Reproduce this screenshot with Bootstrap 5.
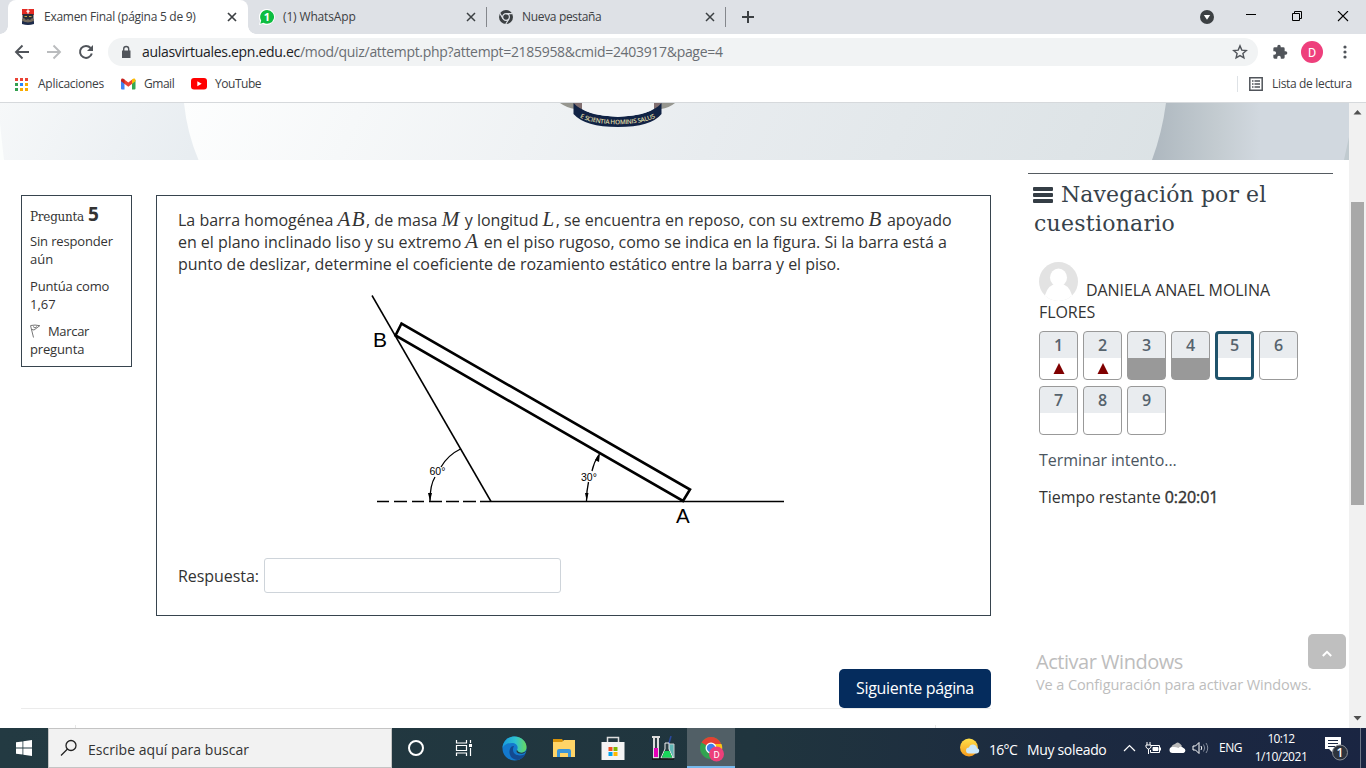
<!DOCTYPE html>
<html lang="es">
<head>
<meta charset="utf-8">
<title>Examen Final (página 5 de 9)</title>
<link href="https://cdn.jsdelivr.net/npm/bootstrap@5.3.0/dist/css/bootstrap.min.css" rel="stylesheet">
<style>
body{width:1366px;height:768px;overflow:hidden;background:#fff;color:#333;font-family:"Open Sans","Noto Sans",sans-serif;font-size:16px}
svg{display:block;flex:none}
.ui{font-size:12px;line-height:18px;color:#3c4043}
.slots{display:grid;align-items:center;white-space:nowrap}
.t{justify-self:start;white-space:nowrap;display:inline-block}
.k0{letter-spacing:-.06px}.k1{letter-spacing:-.15px}.k2{letter-spacing:-.27px}.k3{letter-spacing:-.33px}.k4{letter-spacing:-.47px}.k7{letter-spacing:-.7px}
.tabstrip{height:34px;background:#dee1e6;grid-template-columns:8px 240px 11px 24px 181px 17px 17px 24px 181px 17px 23px 457px 45px 46px 46px 22px}
.tab-on{height:34px;background:#fff;border-radius:8px 8px 0 0;position:relative;grid-template-columns:12px 24px 181px 20px}
.tab-on::before,.tab-on::after{content:"";position:absolute;bottom:0;width:8px;height:8px}
.tab-on::before{left:-8px;background:radial-gradient(circle at 0 0,transparent 7.5px,#fff 8px)}
.tab-on::after{right:-8px;background:radial-gradient(circle at 100% 0,transparent 7.5px,#fff 8px)}
.tab-end{border-right:1px solid #84878c;height:20px;width:6px}
.toolbar{height:36px;grid-template-columns:14px 32px 32px 30px 1150px 14px 32px 32px 20px}
.omni{height:28px;border-radius:14px;background:#f1f3f4;grid-template-columns:11px 23px 1090px 16px;font-size:14px;color:#6a6e73}
.omni b{font-weight:400;color:#202124}
.omni .t{letter-spacing:-.31px}
.bookmarks{grid-template-columns:15px 23px 83px 23px 47px 24px 1022px 12px 23px 80px;border-bottom:1px solid #d6d9dc;height:33px;padding-bottom:4px}
.page-area{height:625px}
.content-side{width:1349px;position:relative}
.banner{height:57px;background:#eceff2}
.qinfo{width:111px;height:172px;margin:35px 24px 0 21px;border:1px solid #37444e;padding:9px 8px;font-size:13px;line-height:18px}
.qinfo .slab{font-size:12px;color:#333;letter-spacing:-.25px}
.qinfo .num{font-size:19px;margin-left:4px}
.slab{font-family:"DejaVu Serif","Noto Sans",serif;color:#37424a}
.qmain{width:835px}
.qbox{height:421px;margin-top:35px;border:1px solid #37444e;padding:13px 21px}
.qtext{line-height:22px;height:66px}
.qtext i{font-family:"Liberation Serif",serif;font-size:21px;line-height:1;letter-spacing:1.4px}
.l2{letter-spacing:-.035px}.l3{letter-spacing:-.055px}
.fig{margin:10px 0 0 182px}
.ans{height:35px;margin-top:23px}
.ans input{width:297px;height:35px;border:1px solid #ced4da;border-radius:3px;padding:0;margin-left:5px}
.next{width:152px;height:39px;background:#052c5d;color:#fff;border-radius:5px;margin-top:53px;line-height:39px;padding:0;border:0}
.next:hover{background:#052c5d;color:#fff}
.endline{width:970px;border-top:1px solid #ebebeb;margin-left:-135px}
.qfoot{width:861px;height:3px;margin:16px 0 0 -81px;border:solid #e6e6e6;border-width:0 1px}
.qnav{width:305px;margin:13px 0 0 37px;border-top:1px solid #555b61;padding:6px 0 0 6px}
.qnav h2{font-size:22px;line-height:29px;margin:0}
.who{padding:22px 0 0 5px;line-height:22px}
.who-top{height:41px}
.who-top svg{align-self:start;margin-top:2px}
.qbtns{display:grid;grid-template-columns:repeat(6,39px);gap:6px 5px;padding-left:5px;margin-top:8px}
.qb{height:49px;border:1px solid #999;border-radius:4px;background:linear-gradient(#e9ecef 26px,#fff 26px);text-align:center;font-weight:600;color:#56636d;line-height:26px;font-size:16px;overflow:hidden}
.qb.done{background:linear-gradient(#e9ecef 26px,#999 26px)}
.qb.now{border:3px solid #1f536b;line-height:22px;background:linear-gradient(#e9ecef 24px,#fff 24px)}
.qb svg{margin:5px auto 0}
.finish{padding:14px 0 0 5px;line-height:22px;color:#4b565f}
.timer{padding:15px 0 0 5px;line-height:22px}
.timer span span{-webkit-text-stroke:.4px}
.sb{width:17px;background:#f1f1f1;position:relative}
.thumb{width:13px;height:303px;margin:99px auto 0 2px;background:#a8a8a8}
.sb svg{position:absolute;left:4px}
.sb .up{top:7px}.sb .down{bottom:7px}
.totop{position:absolute;left:1308px;top:531px;width:38px;height:35px;border-radius:5px;background:#bfbfbf;padding:16px 0 0 14px}
.activate{position:absolute;left:1036px;top:547px;color:#bdbdbd;white-space:nowrap}
.activate div:first-child{font-size:20px;line-height:24px}
.activate div:last-child{font-size:14.5px;line-height:22px}
.activate .k1{letter-spacing:-.1px}
.taskbar{height:40px;background:linear-gradient(90deg,#233a42 0,#20353e 55%,#1c2a40 78%,#1a2542);grid-template-columns:48px 344px 48px 48px 53px 45px 53px 47px 49px 225px 29px 38px 96px 22px 24px 23px 27px 35px 66px 40px 1px}
.taskbar.ui{color:#fff}
.sbox{height:40px;background:#f2f2f2;border:1px solid #c4c4c4;color:#333;grid-template-columns:11px 28px 250px;font-size:14px}
.chr{background:#515f66;height:40px;border-bottom:2px solid #76b9ed;width:48px;justify-self:start;padding:8px 0 0 12px;margin-left:1px}
.taskbar>svg{justify-self:center}
.taskbar>svg.st{justify-self:start}
.wx{font-size:14px}
.clock{width:54px}
.clock .t{display:block;justify-self:auto}
.peek{height:40px;background:#6d7586}
</style>
</head>
<body>
<header class="ui">
 <div class="slots tabstrip">
  <span></span>
  <div class="slots tab-on">
   <span></span>
   <svg width="16" height="16" viewBox="0 0 16 16"><path fill="#e32b24" d="M2 0h12v6H2z"/><path fill="#fff" d="M7.300 .5h1.400v1.300h1v1h-1v1.700H7.300V2.800h-1v-1h1z"/><path fill="#292d38" d="M2.500 5h11v9h-11z"/><path fill="#746a5c" d="M2 10l2-1 2 2 2-1 2 1 2-2 2 1v2l-6 2-6-2z"/><path d="M2 12q6 3 12 0v3q-6 2-12 0z" fill="#1d2b4c"/><path d="M4.500 7.500h2.500M9 7.500h2.500" stroke="#c9a646"/></svg>
   <span class="t k2">Examen Final (página 5 de 9)</span>
   <svg width="14" height="14" viewBox="0 0 14 14" stroke="#3c4043" stroke-width="1.700"><path d="M3 3l8 8M11 3l-8 8"/></svg>
  </div>
  <span></span>
  <svg width="16" height="16" viewBox="0 0 16 16"><path fill="#fff" d="M8 0a8 8 0 1 1-4 15L0 16l1-4A8 8 0 0 1 8 0z"/><path fill="#0dbd41" d="M8 1a6.900 6.900 0 1 1-3.600 12.700L1.300 14.700 2.200 11.500A6.900 6.900 0 0 1 8 1z"/><text x="8" y="12" font-size="11" font-weight="700" text-anchor="middle" fill="#fff">1</text></svg>
  <span class="t k1">(1) WhatsApp</span>
  <svg width="14" height="14" viewBox="0 0 14 14" stroke="#3c4043" stroke-width="1.500"><path d="M3 3l8 8M11 3l-8 8"/></svg>
  <span class="tab-end"></span>
  <svg width="16" height="16" viewBox="0 0 16 16"><circle cx="8" cy="8" r="7" fill="#3c4043"/><circle cx="8" cy="8" r="3.400" fill="none" stroke="#dee1e6" stroke-width="1.200"/><path d="M8 4.600h6.500M5 9.800L1.900 4.300M11 9.800L7.800 15" stroke="#dee1e6" stroke-width="1.200"/></svg>
  <span class="t k3">Nueva pestaña</span>
  <svg width="14" height="14" viewBox="0 0 14 14" stroke="#3c4043" stroke-width="1.500"><path d="M3 3l8 8M11 3l-8 8"/></svg>
  <span class="tab-end"></span>
  <svg width="14" height="14" viewBox="0 0 14 14" stroke="#3c4043" stroke-width="2" style="margin-left:-2px"><path d="M7 1v12M1 7h12"/></svg>
  <svg width="14" height="14" viewBox="0 0 14 14"><circle cx="7" cy="7" r="7" fill="#3c4043"/><path d="M3.800 5h6.400L7 9.800z" fill="#fff"/></svg>
  <svg width="12" height="12" viewBox="0 0 12 12"><path d="M1 3.500h10" stroke="#000"/></svg>
  <svg width="12" height="12" viewBox="0 0 12 12" fill="none" stroke="#000"><path d="M1.500 2.500h7v7h-7zM3.500 2.500v-2h7v7h-2"/></svg>
  <svg width="12" height="12" viewBox="0 0 12 12"><path d="M1 .5l10 10M11 .5L1 10.500" stroke="#000" stroke-width="1.100" transform="translate(0 -.5)"/></svg>
 </div>
 <div class="slots toolbar">
  <span></span>
  <svg width="16" height="16" viewBox="0 0 16 16" fill="none" stroke="#50545a" stroke-width="1.900"><path d="M15 8H2M8.500 1.500L2 8l6.500 6.500"/></svg>
  <svg width="16" height="16" viewBox="0 0 16 16" fill="none" stroke="#babcbe" stroke-width="1.900"><path d="M1 8h13M7.500 1.500L14 8l-6.500 6.500"/></svg>
  <svg width="16" height="16" viewBox="0 0 16 16" fill="none" stroke="#50545a" stroke-width="2"><path d="M13.800 9.500A6 6 0 1 1 12.600 4"/><path fill="#50545a" stroke="none" d="M15 1v6H9z"/></svg>
  <div class="slots omni"><span></span>
   <svg width="14" height="14" viewBox="0 0 14 14"><path fill="#50545a" d="M3 5.500h8.500V13H3z"/><path d="M4.700 6V4a2.500 2.500 0 0 1 5 0v2" fill="none" stroke="#50545a" stroke-width="1.400"/></svg>
   <span class="t"><b>aulasvirtuales.epn.edu.ec</b>/mod/quiz/attempt.php?attempt=2185958&amp;cmid=2403917&amp;page=4</span>
   <svg width="16" height="16" viewBox="0 0 16 16" fill="none" stroke="#50545a" stroke-width="1.400"><path d="M8 1.900l1.800 4.200 4.500.4-3.400 3 1 4.400L8 11.600l-3.900 2.300 1-4.400-3.400-3 4.500-.4z"/></svg>
  </div>
  <span></span>
  <svg width="16" height="16" viewBox="0 0 24 24" fill="#50545a"><path d="M20.500 11H19V7a2 2 0 0 0-2-2h-4V3.500a2.500 2.500 0 0 0-5 0V5H4a2 2 0 0 0-2 2v3.800h1.500a2.700 2.700 0 0 1 0 5.400H2V20a2 2 0 0 0 2 2h3.800v-1.500a2.700 2.700 0 0 1 5.400 0V22H17a2 2 0 0 0 2-2v-4h1.500a2.500 2.500 0 0 0 0-5z"/></svg>
  <svg width="22" height="22" viewBox="0 0 22 22" style="margin-left:-3px"><circle cx="11" cy="11" r="11" fill="#ee3f7c"/><text x="11" y="15.500" font-size="12.500" text-anchor="middle" fill="#fff" font-family="Roboto">D</text></svg>
  <svg width="6" height="16" viewBox="0 0 6 16" fill="#50545a" style="margin-left:6px"><circle cx="3" cy="3" r="1.600"/><circle cx="3" cy="8" r="1.600"/><circle cx="3" cy="13" r="1.600"/></svg>
 </div>
 <div class="slots bookmarks">
  <span></span>
  <svg width="13" height="13" viewBox="0 0 13 13"><path fill="#ea4335" d="M0 0h3v3H0zM5 0h3v3H5zM10 0h3v3h-3z"/><path fill="#34a050" d="M0 5h3v3H0zM0 10h3v3H0z"/><path fill="#2684fc" d="M5 5h3v3H5z"/><path fill="#f9ab00" d="M10 5h3v3h-3zM5 10h3v3H5zM10 10h3v3h-3z"/></svg>
  <span class="t k2">Aplicaciones</span>
  <svg width="15" height="12" viewBox="0 0 15 12"><path fill="#4285f4" d="M0 2h3.500v9.500H1a1 1 0 0 1-1-1z"/><path fill="#34a853" d="M11 2h3.500v8.500a1 1 0 0 1-1 1H11z"/><path fill="#ea4335" d="M3 1.200l4.300 3.400 4.200-3.400v4.200L7.300 8.800 3 5.400z"/><path fill="#c5221f" d="M0 2C0 .3 1.800-.2 3.500 1.400v4.400L0 3.200z"/><path fill="#fbbc04" d="M14.500 2c0-1.700-1.800-2.200-3.500-.6v4.400l3.500-2.600z"/></svg>
  <span class="t k4">Gmail</span>
  <svg width="16" height="12" viewBox="0 0 16 12"><rect width="16" height="11.500" rx="3" fill="#f00"/><path d="M6.300 3.300v5L10.700 5.800z" fill="#fff"/></svg>
  <span class="t k4">YouTube</span>
  <span class="border-start" style="height:16px"></span>
  <svg width="14" height="14" viewBox="0 0 14 14" fill="none" stroke="#50545a" stroke-width="1.500"><path d="M.8.8h12.400v12.400H.8z"/><path d="M3 4h1.500M3 7h1.500M3 10h1.500M5.500 4H11M5.500 7H11M5.500 10H11"/></svg>
  <span class="t k3">Lista de lectura</span>
 </div>
</header>
<div class="page-area d-flex">
 <div class="content-side">
  <svg class="banner" width="1349" height="57" viewBox="0 0 1349 57">
   <defs>
    <linearGradient id="a" gradientUnits="userSpaceOnUse" x1="0" y1="0" x2="170" y2="90"><stop stop-color="#f6f8f9"/><stop offset="1" stop-color="#e8edf1"/></linearGradient>
    <linearGradient id="b" gradientUnits="userSpaceOnUse" x1="180" y1="0" x2="1080" y2="420"><stop stop-color="#fdfefe"/><stop offset=".5" stop-color="#e8ecef"/><stop offset="1" stop-color="#d9e0e3"/></linearGradient>
    <linearGradient id="c" gradientUnits="userSpaceOnUse" x1="1150" y1="0" x2="1260" y2="0"><stop stop-color="#adb7bf"/><stop offset=".6" stop-color="#c3cbd0"/><stop offset="1" stop-color="#d1d8df"/></linearGradient>
   </defs>
   <path fill="url(#a)" d="M0 0h220v57H0z"/><path fill="#fcfefd" d="M0 20q2 20 4 37H0z"/>
   <path fill="url(#c)" d="M1140 0h209v57h-209z"/><path fill="#c0cacf" d="M1349 34v23h-5z"/>
   <path fill="url(#b)" d="M184 0H1166Q1162 30 1152 57H198.500Q187 30 184 0z"/>
   <path fill="#96968f" d="M560 0h15v6q-8-1-15-6zM675 0h-14v6q8-1 14-6z"/><path fill="#816f70" d="M574 0h8v10h-8zM654 0h7v10h-7z"/>
   <path fill="#f1f3f5" d="M582 0h72v14h-72z"/><path d="M613 0l3 2M623 0l-3 2" stroke="#142548" stroke-width="2"/>
   <path fill="#112345" d="M573.500 0Q584 12 618 14 652 12 661.500 0v11Q651 24 618 24 585 24 573.500 11z"/><path fill="#f1f3f5" d="M582 0h72v5Q645 13 618 13.500 590 13 582 5z"/>
   <path id="arc" fill="none" d="M580 14.500Q592 21 618 21.300 644 21 659 13"/>
   <text font-size="6.300" font-weight="600" fill="#e0dda6"><textPath href="#arc" textLength="77">E SCIENTIA HOMINIS SALUS</textPath></text>
  </svg>
  <div class="d-flex align-items-start">
   <aside class="qinfo">
    <div style="height:19px;line-height:19px;margin-bottom:8px"><span class="slab t">Pregunta</span><b class="t num">5</b></div>
    <div style="margin-bottom:9px"><span class="t k1">Sin responder</span><br>aún</div>
    <div class="mb-2"><span class="t k1">Puntúa como</span><br>1,67</div>
    <div style="margin-top:9px"><svg class="d-inline-block me-2" width="10" height="14" viewBox="0 0 10 14" fill="none" stroke="#777" style="vertical-align:-2px"><path d="M.5 1.500l3 12M.8 1.500q4-1 9 .2L4 6 2 5.500M3 2.500l2 1.500 2-1.500"/></svg><span class="t k3">Marcar</span><br><span class="t k1">pregunta</span></div>
   </aside>
   <main class="qmain">
    <div class="qbox">
     <div class="qtext">
      <div class="t l1">La barra homogénea <i>AB</i>, de masa <i>M</i> y longitud <i>L</i>, se encuentra en reposo, con su extremo <i>B</i> apoyado</div>
      <div class="t l2">en el plano inclinado liso y su extremo <i>A</i> en el piso rugoso, como se indica en la figura. Si la barra está a</div>
      <div class="t l3">punto de deslizar, determine el coeficiente de rozamiento estático entre la barra y el piso.</div>
     </div>
     <svg class="fig" width="440" height="250" viewBox="0 0 440 250" fill="none" stroke="#000" font-family="Liberation Sans">
      <path stroke-width="1.500" d="M12 10.500L131 216.500"/>
      <path stroke-width="1.300" d="M120 216.500h304M17 216.500h12M34 216.500h13M52 216.500h12M69 216.500h13M86 216.500h13M103 216.500h13"/>
      <path stroke-width="2.600" d="M41.500 38.500L35.500 50.500 323 216l7-11.500z"/>
      <path stroke-width="1.300" d="M100.500 164Q88 170 81 182M75 192Q70 200 70 216M239 169.500Q234 177 232 186M228.500 197Q226.500 206 226.500 216"/>
      <path fill="#000" stroke="none" d="M68 208h4l-2 8zM225 208h3.500l-1.800 8zM240 168l-1 9-4-2z"/>
      <g fill="#000" stroke="none"><text x="13" y="61.500" font-size="21">B</text><text x="316" y="238" font-size="20.500">A</text><text x="69.500" y="190" font-size="10.500">60°</text><text x="221" y="195.500" font-size="10.500">30°</text></g>
     </svg>
     <div class="ans d-flex align-items-center"><label class="t k0">Respuesta:</label><input class="form-control" type="text" aria-label="Respuesta"></div>
    </div>
    <div class="d-flex justify-content-end"><button class="btn next"><span class="t k3">Siguiente página</span></button></div>
    <div class="endline"></div>
    <div class="qfoot"></div>
   </main>
   <aside class="qnav">
    <h2 class="slab"><svg class="d-inline-block" width="20" height="18" viewBox="0 0 20 18" fill="#343d45" style="vertical-align:-2px;margin-right:8px;margin-left:-1px"><rect y="1" width="20" height="4" rx="1"/><rect y="7" width="20" height="4" rx="1"/><rect y="13" width="20" height="4" rx="1"/></svg><span class="t" style="letter-spacing:.1px">Navegación por el</span><br><span class="t" style="letter-spacing:.25px">cuestionario</span></h2>
    <div class="who"><div class="d-flex align-items-end who-top"><svg width="39" height="39" viewBox="0 0 39 39"><defs><clipPath id="av"><circle cx="19.500" cy="19.500" r="19.500"/></clipPath></defs><g clip-path="url(#av)"><path fill="#e3e3e3" d="M0 0h39v39H0z"/><ellipse cx="19.500" cy="15.500" rx="8.500" ry="9" fill="#fff"/><path fill="#fff" d="M5 39q1-13 10-17h9q9 4 10 17z"/></g></svg><span class="t ms-2 k0">DANIELA ANAEL MOLINA</span></div><span class="t k0">FLORES</span></div>
    <div class="qbtns">
     <div class="qb">1<svg width="12" height="11" viewBox="0 0 12 11"><path fill="#800000" d="M6 0l5.500 11H.5z"/></svg></div>
     <div class="qb">2<svg width="12" height="11" viewBox="0 0 12 11"><path fill="#800000" d="M6 0l5.500 11H.5z"/></svg></div>
     <div class="qb done">3</div><div class="qb done">4</div><div class="qb now">5</div><div class="qb">6</div><div class="qb">7</div><div class="qb">8</div><div class="qb">9</div>
    </div>
    <div class="finish"><span class="t k0">Terminar intento...</span></div>
    <div class="timer"><span class="t k0">Tiempo restante <span>0:20:01</span></span></div>
   </aside>
  </div>
  <div class="activate"><div><span class="t k4">Activar Windows</span></div><div><span class="t k1">Ve a Configuración para activar Windows.</span></div></div>
  <div class="totop"><svg width="10" height="7" viewBox="0 0 10 7" fill="none" stroke="#fff" stroke-width="2"><path d="M.8 6L5 1.800 9.200 6"/></svg></div>
 </div>
 <div class="sb d-flex"><svg class="up" width="9" height="5" viewBox="0 0 9 5"><path fill="#505050" d="M.5 4.500L4.500 0l4 4.500z"/></svg><div class="thumb"></div><svg class="down" width="9" height="5" viewBox="0 0 9 5"><path fill="#505050" d="M.5 0l4 4.500 4-4.500z"/></svg></div>
</div>
<footer class="slots taskbar ui">
 <svg width="16" height="16" viewBox="0 0 16 16" fill="#fff"><path d="M0 2.300L6.500 1.400v6.200H0zM7.300 1.300L16 0v7.600H7.300zM0 8.400h6.500v6.200L0 13.700zM7.300 8.400H16V16l-8.700-1.300z"/></svg>
 <div class="slots sbox"><span></span><svg width="18" height="18" viewBox="0 0 18 18" fill="none" stroke="#222" stroke-width="1.300"><circle cx="11" cy="6.500" r="5"/><path d="M7.500 10L1 16.500"/></svg><span class="t mt-1" style="letter-spacing:.04px">Escribe aquí para buscar</span></div>
 <svg width="18" height="18" viewBox="0 0 18 18"><circle cx="9" cy="9" r="7" fill="none" stroke="#fff" stroke-width="2"/></svg>
 <svg width="18" height="18" viewBox="0 0 18 18" fill="none" stroke="#fff" stroke-width="1.200"><path d="M1.500 1v3h10V1M1.500 17v-3h10v3M1.500 6.500h10v5h-10zM15.500 1v3M15.500 9v8"/><path fill="#fff" stroke="none" d="M14 5h3v3h-3z"/></svg>
 <svg width="25" height="25" viewBox="0 0 25 25"><defs><linearGradient id="e" x2="1"><stop stop-color="#179bdf"/><stop offset=".55" stop-color="#2fc3d0"/><stop offset="1" stop-color="#68d85c"/></linearGradient></defs><circle cx="12.500" cy="12.500" r="12" fill="#1379cd"/><path fill="url(#e)" d="M.5 12C1 5 6 .5 12.500.5 20 .5 24.500 6 24.500 11c0 4-3 6-6.500 6-3 0-4-1.500-3-3 2-4-1-7-5-7C5 7 2 9 .5 12z"/><path fill="#134a91" d="M9 11c-4 6 0 13 7 13 4-1 6-3 7.500-6-3 2-13 3-12.500-5 0-1 .5-2 1-3-1 0-2 0-3 1z"/><path fill="#1f343d" d="M24.500 14.500q-1.500 3-5 3.200-4 0-5-2.200 0-1 .5-1.700 1 3 5 3 3-.3 4.500-2.300z"/></svg>
 <svg width="22" height="20" viewBox="0 0 22 20"><path fill="#d8930a" d="M0 1h9l2 3H0z"/><path fill="#ffd467" d="M0 4h9l2-2h11v17H0z"/><path fill="#3b95d8" d="M4 19v-6q0-2 2-2h10q2 0 2 2v6h-3v-4H7v4z"/></svg>
 <svg width="24" height="24" viewBox="0 0 24 24"><path d="M6.500 7V1.500h11V7" fill="none" stroke="#ddd" stroke-width="1.500"/><path fill="#f4f4f4" d="M.5 6h23v18H.5z"/><path fill="#f25022" d="M7.500 11h4v4h-4z"/><path fill="#7fba00" d="M12.500 11h4v4h-4z"/><path fill="#00a4ef" d="M7.500 16h4v4h-4z"/><path fill="#ffb900" d="M12.500 16h4v4h-4z"/></svg>
 <svg width="24" height="24" viewBox="0 0 24 24"><path fill="#ddd" d="M1 0h8v2H1zM2 2h6v21H2z"/><path fill="#304047" d="M4 2h2v11H4z"/><path fill="#e600b8" d="M3 12h4v9H3z"/><path fill="#60b6b5" stroke="#ccc" d="M17 8h6v14h-6z"/><path d="M20 0l-4 14" stroke="#294aa0" stroke-width="1.500"/><path fill="#2c3f46" stroke="#eee" d="M14 7h4v6l4 9H10l4-9z"/><path fill="#19d65a" d="M13.500 15h5l2.700 6.500H11z"/><path d="M1 23h22" stroke="#111" stroke-width="1.500"/></svg>
 <div class="chr"><svg width="26" height="26" viewBox="0 0 26 26"><circle cx="12" cy="12" r="11" fill="#31a351"/><path fill="#e34133" d="M12 12L2.500 6.500a11 11 0 0 1 19 0L22 8H12z"/><path fill="#fbc116" d="M12 8h10.500A11 11 0 0 1 12 23l5-9z"/><circle cx="12" cy="12" r="5.500" fill="#fff"/><circle cx="12" cy="12" r="4.200" fill="#3f7fea"/><circle cx="17.500" cy="18" r="7.500" fill="#ec3f79"/><text x="17.500" y="21.500" font-size="9.500" text-anchor="middle" fill="#fff" font-family="Roboto">D</text></svg></div>
 <span></span>
 <svg class="st" width="20" height="20" viewBox="0 0 20 20"><defs><linearGradient id="s" x2="0" y2="1"><stop stop-color="#ffe04a"/><stop offset="1" stop-color="#f59a1c"/></linearGradient></defs><circle cx="9" cy="9.500" r="9" fill="url(#s)"/><path fill="#cbe8fa" d="M9 15.500a3 3 0 0 1 0-6q1-3.500 4.500-3 3 .5 3.500 3.500a2.800 2.800 0 0 1 0 5.500z"/></svg>
 <span class="t k7 wx mt-1">16°C</span>
 <span class="t k3 wx mt-1">Muy soleado</span>
 <svg class="st" width="13" height="9" viewBox="0 0 13 9" fill="none" stroke="#fff" stroke-width="1.200"><path d="M1 7l5.500-5.500L12 7"/></svg>
 <svg class="st" width="16" height="13" viewBox="0 0 16 13" fill="none" stroke="#fff"><path d="M6 3.500h8.500v7h-9V8M2 0v3M5 0v3M1 3h5v2q-1 2-2.500 2T1 5zM3.500 7v5"/><path fill="#fff" d="M8 5.500h5v3H8zM15.500 5.500v3"/></svg>
 <svg class="st" width="17" height="12" viewBox="0 0 17 12"><path fill="#bbb" d="M2 7q0-4 4-5 3-4 7 2l-5 5z"/><path fill="#fff" d="M3.500 11a3 3 0 0 1 0-6q3-.5 6 1 2-3 5 0a2.600 2.600 0 0 1 0 5z"/></svg>
 <svg class="st" width="17" height="14" viewBox="0 0 17 14" fill="none" stroke="#fff"><path d="M1 5v4h2.500L7 12.500v-11L3.500 5z"/><path d="M9 5q1.500 2 0 4"/><path stroke="#8890a0" d="M11.500 3.500q2.500 3.500 0 7M14 2q3.500 5 0 10"/></svg>
 <span class="t k4">ENG</span>
 <div class="text-center clock"><span class="t k7">10:12</span><span class="t k4">1/10/2021</span></div>
 <svg width="26" height="26" viewBox="0 0 26 26" style="justify-self:start;margin-left:5px"><path fill="#fff" d="M0 2h16v12H8v4l-4-4H0z"/><path d="M3 5.500h10M3 8.500h10M3 11.500h7" stroke="#1b2944"/><circle cx="15" cy="17.500" r="7.500" fill="#2d333d" stroke="#8b8f96"/><text x="15" y="22" font-size="12" font-weight="600" fill="#fff" text-anchor="middle">1</text></svg>
 <span class="peek"></span>
</footer>
<script src="https://cdn.jsdelivr.net/npm/bootstrap@5.3.0/dist/js/bootstrap.bundle.min.js"></script>
</body>
</html>
